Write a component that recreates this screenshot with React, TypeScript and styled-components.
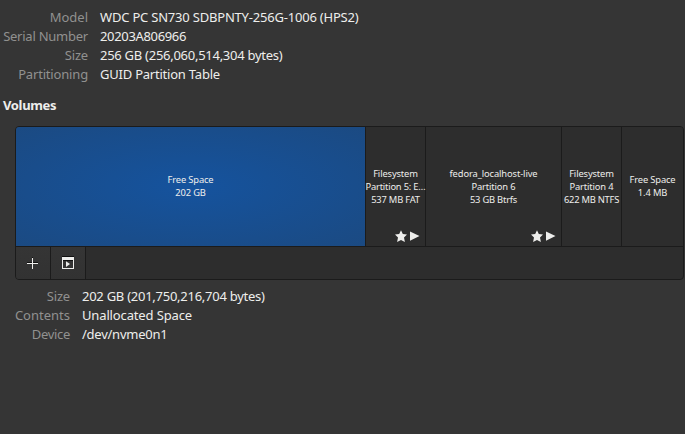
import React from "react";
import styled, { createGlobalStyle } from "styled-components";

const GlobalStyle = createGlobalStyle`
  * { box-sizing: border-box; }
  body {
    margin: 0;
    background: #353535;
    color: #eeeeec;
    font-family: "Noto Sans", sans-serif;
    overflow: hidden;
  }
`;

const Page = styled.main`
  height: 434px;
  padding-top: 8px;
  overflow: hidden;
`;

const Details = styled.dl<{ $labelWidth: number }>`
  display: grid;
  grid-template-columns: ${(p) => p.$labelWidth}px 1fr;
  column-gap: 12px;
  grid-auto-rows: 19px;
  margin: 0;
  font-size: 13px;
  line-height: 19px;
  white-space: nowrap;
`;

const Label = styled.dt<{ $tracking: number }>`
  color: #919190;
  text-align: right;
  justify-self: end;
  letter-spacing: ${(p) => p.$tracking}px;
`;

const Value = styled.dd<{ $tracking: number }>`
  margin: 0;
  justify-self: start;
  letter-spacing: ${(p) => p.$tracking}px;
`;

const Heading = styled.h2`
  margin: 12px 0 0 3px;
  font-size: 13px;
  line-height: 19px;
  font-weight: 700;
  letter-spacing: -0.35px;
`;

const VolumeBox = styled.section`
  width: 669px;
  height: 154px;
  margin: 11px 0 7px 15px;
  border: 1px solid #1b1b1b;
  border-radius: 4px;
  background: #2d2d2d;
  overflow: hidden;
`;

const Segments = styled.div`
  display: flex;
  height: 120px;
  border-bottom: 1px solid #1b1b1b;
`;

const Segment = styled.div<{ $width: number; $selected?: boolean }>`
  display: grid;
  grid-template: minmax(0, 1fr) / minmax(0, 1fr);
  width: ${(p) => p.$width}px;
  flex: none;
  background: ${(p) =>
    p.$selected ? "radial-gradient(ellipse farthest-corner, #15539e, #1b4a82)" : "#2d2d2d"};
  border-right: 1px solid #1b1b1b;
  &:last-child { border-right: 0; }
`;

const Caption = styled.div`
  grid-area: 1 / 1;
  align-self: center;
  font-size: 9.33px;
  line-height: 13px;
  letter-spacing: -0.13px;
  white-space: nowrap;
  padding-bottom: 1px;
`;

const Line = styled.div<{ $tracking?: number }>`
  display: flex;
  justify-content: center;
  letter-spacing: ${(p) => p.$tracking ?? -0.13}px;
`;

const Badges = styled.div`
  grid-area: 1 / 1;
  align-self: end;
  justify-self: end;
  display: flex;
  gap: 2px;
  padding: 0 4px 3px 0;
  svg { display: block; }
`;

const Toolbar = styled.div`
  display: flex;
  height: 32px;
`;

const ToolButton = styled.button`
  width: 35px;
  height: 32px;
  padding: 0;
  display: grid;
  place-items: center;
  color: #eeeeec;
  background: linear-gradient(#353535, #323232);
  border: 0;
  border-right: 1px solid #1b1b1b;
  box-shadow: 0 1px 0 #0c0c0c;
  svg { display: block; }
`;

const StarIcon = () => (
  <svg width="12" height="13" viewBox="0 0 12 13" fill="#eeeeec">
    <path d="M6 .3 7.8 4.1 12 4.6 9 7.6 9.9 12 6 9.9 2.1 12 3 7.6 0 4.6 4.2 4.1Z" />
  </svg>
);

const PlayIcon = () => (
  <svg width="12" height="13" viewBox="0 0 12 13" fill="#eeeeec">
    <path d="M1 1.5 10.5 6 1 10.8Z" />
  </svg>
);

const PlusIcon = () => (
  <svg width="16" height="16" viewBox="0 0 16 16">
    <path d="M2 7h11v1H2zM7 2h1v1H7z" fill="#111" />
    <path d="M7 3h1v5h5v1H8v5H7V9H2V8h5z" fill="#eeeeec" />
  </svg>
);

const ActionsIcon = () => (
  <svg width="16" height="16" viewBox="0 0 16 16">
    <path d="M2 1h12v1H2zM3 5h10v1H3z" fill="#111" />
    <path fillRule="evenodd" d="M2 2h12v12H2zM3 5v8h10V5z" fill="#eeeeec" />
    <path d="M6 6.2 10 9 6 12z" fill="#eeeeec" />
  </svg>
);

interface CaptionLine {
  text: string;
  tracking?: number;
}

interface Volume {
  width: number;
  lines: CaptionLine[];
  selected?: boolean;
  mounted?: boolean;
}

const volumes: Volume[] = [
  { width: 350, lines: [{ text: "Free Space" }, { text: "202 GB" }], selected: true },
  {
    width: 60,
    lines: [
      { text: "Filesystem" },
      { text: "Partition 5: E…", tracking: -0.2 },
      { text: "537 MB FAT", tracking: -0.2 },
    ],
    mounted: true,
  },
  {
    width: 136,
    lines: [
      { text: "fedora_localhost-live", tracking: -0.1 },
      { text: "Partition 6" },
      { text: "53 GB Btrfs", tracking: -0.2 },
    ],
    mounted: true,
  },
  {
    width: 60,
    lines: [
      { text: "Filesystem" },
      { text: "Partition 4" },
      { text: "622 MB NTFS", tracking: -0.23 },
    ],
  },
  { width: 61, lines: [{ text: "Free Space" }, { text: "1.4 MB" }] },
];

interface InfoRow {
  label: string;
  value: string;
  labelTracking: number;
  valueTracking: number;
}

const driveInfo: InfoRow[] = [
  { label: "Model", value: "WDC PC SN730 SDBPNTY-256G-1006 (HPS2)", labelTracking: 0, valueTracking: -0.2 },
  { label: "Serial Number", value: "20203A806966", labelTracking: -0.24, valueTracking: -0.34 },
  { label: "Size", value: "256 GB (256,060,514,304 bytes)", labelTracking: -0.2, valueTracking: -0.27 },
  { label: "Partitioning", value: "GUID Partition Table", labelTracking: -0.17, valueTracking: -0.22 },
];

const volumeInfo: InfoRow[] = [
  { label: "Size", value: "202 GB (201,750,216,704 bytes)", labelTracking: -0.2, valueTracking: -0.26 },
  { label: "Contents", value: "Unallocated Space", labelTracking: 0, valueTracking: -0.14 },
  { label: "Device", value: "/dev/nvme0n1", labelTracking: -0.3, valueTracking: -0.25 },
];

const InfoList = ({ rows, labelWidth }: { rows: InfoRow[]; labelWidth: number }) => (
  <Details $labelWidth={labelWidth}>
    {rows.map((row) => (
      <React.Fragment key={row.label}>
        <Label $tracking={row.labelTracking}>{row.label}</Label>
        <Value $tracking={row.valueTracking}>{row.value}</Value>
      </React.Fragment>
    ))}
  </Details>
);

export default function App() {
  return (
    <Page>
      <GlobalStyle />
      <InfoList rows={driveInfo} labelWidth={88} />
      <Heading>Volumes</Heading>
      <VolumeBox>
        <Segments>
          {volumes.map((v, i) => (
            <Segment key={i} $width={v.width} $selected={v.selected}>
              <Caption>
                {v.lines.map((line) => (
                  <Line key={line.text} $tracking={line.tracking}>
                    {line.text}
                  </Line>
                ))}
              </Caption>
              {v.mounted && (
                <Badges>
                  <StarIcon />
                  <PlayIcon />
                </Badges>
              )}
            </Segment>
          ))}
        </Segments>
        <Toolbar>
          <ToolButton aria-label="Create partition">
            <PlusIcon />
          </ToolButton>
          <ToolButton aria-label="Additional partition options">
            <ActionsIcon />
          </ToolButton>
        </Toolbar>
      </VolumeBox>
      <InfoList rows={volumeInfo} labelWidth={70} />
    </Page>
  );
}
